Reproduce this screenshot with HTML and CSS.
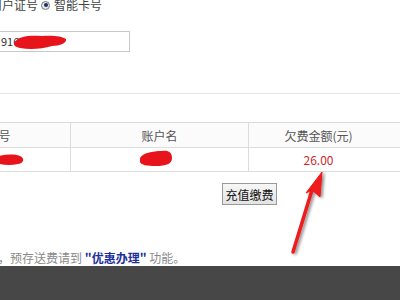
FILE: index.html
```html
<!DOCTYPE html>
<html lang="zh-CN">
<head>
<meta charset="utf-8">
<link rel="stylesheet" href="styles.css">
</head>
<body>
<div class="page">
  <div class="opts">
    <span class="radio"></span><span class="lbl">用户证号</span>
    <span class="radio on"></span><span class="lbl">智能卡号</span>
  </div>
  <div class="inputrow">
    <div class="field">916</div>
    <svg class="scrib s1" width="56" height="18" viewBox="0 0 56 18"><path d="M3 9 C6 3,18 2,30 3 C40 2,50 3,54 6 C55 10,48 13,40 13 C30 16,18 17,8 15 C3 14,1 12,3 9 Z" fill="#e8141b"/></svg>
  </div>
  <div class="sep"></div>
  <table class="grid">
    <thead>
      <tr><th class="c1">用户证号</th><th class="c2">账户名</th><th class="c3">欠费金额(元)</th></tr>
    </thead>
    <tbody>
      <tr><td class="c1"></td><td class="c2"></td><td class="c3 amt">26.00</td></tr>
    </tbody>
  </table>
  <div class="actions"><button class="btn">充值缴费</button></div>
  <p class="note">，预存送费请到 <b class="hl">"优惠办理"</b> 功能。</p>
</div>
<div class="bar"></div>
<svg class="scrib s2" width="30" height="14" viewBox="0 0 30 14"><path d="M0 4 C8 1,18 1,24 3 C29 5,28 10,22 11 C14 13,6 12,0 10 Z" fill="#e8141b"/></svg>
<svg class="scrib s3" width="36" height="18" viewBox="0 0 36 18"><path d="M2 8 C5 3,14 1,24 1 C30 0,34 2,34 8 C34 14,28 16,18 16 C9 16,3 15,2 12 Z" fill="#e8141b"/></svg>
<svg class="arrow" width="50" height="100" viewBox="0 0 50 100">
  <defs><filter id="sh" x="-50%" y="-50%" width="200%" height="200%"><feDropShadow dx="2" dy="1" stdDeviation="1.4" flood-color="#000" flood-opacity="0.45"/></filter></defs>
  <g filter="url(#sh)" fill="#ee1a1a" stroke="#ee1a1a">
    <line x1="13" y1="86" x2="32" y2="24" stroke-width="3.5" stroke-linecap="round"/>
    <polygon points="42,6 26,27 32,24 40,31" stroke-width="1" stroke-linejoin="round"/>
  </g>
</svg>
</body>
</html>
```
FILE: styles.css
```css
html, body {
  margin: 0;
  padding: 0;
  background: #fff;
  overflow: hidden;
  width: 400px;
  height: 300px;
  position: relative;
  font-family: "Noto Sans CJK SC", "Noto Sans", sans-serif;
  font-size: 12px;
}
.page {
  margin-left: -98px;
  width: 520px;
}
.opts {
  display: flex;
  align-items: center;
  height: 14px;
  margin-top: -2px;
  line-height: 14px;
  color: #444;
  padding-left: 72px;
}
.radio {
  width: 9px;
  height: 9px;
  border: 1px solid #7a7a7a;
  border-radius: 50%;
  background: radial-gradient(circle, #f4f4f4 0, #dcdcdc 100%);
  box-sizing: border-box;
  margin: 0 4px 0 3px;
  position: relative;
}
.radio.on::after {
  content: "";
  position: absolute;
  left: 1.5px;
  top: 1.5px;
  width: 4px;
  height: 4px;
  border-radius: 50%;
  background: #1b2f5e;
}
.inputrow {
  margin-top: 19px;
  position: relative;
  height: 21px;
}
.field {
  margin-left: 90px;
  width: 138px;
  height: 21px;
  box-sizing: border-box;
  border: 1px solid #c8c8c8;
  padding-left: 8px;
  line-height: 19px;
  color: #333;
  font-size: 11px;
}
.scrib { position: absolute; }
.s1 { left: 110px; top: 2px; }
.s2 { left: -4px; top: 153px; }
.s3 { left: 138px; top: 150px; }
.sep {
  margin-top: 41px;
  height: 1px;
  background: #e6e6e6;
}
.grid {
  margin-top: 28px;
  border-collapse: collapse;
  table-layout: fixed;
  width: 516px;
}
.grid th, .grid td {
  border: 1px solid #dcdcdc;
  text-align: center;
  font-weight: normal;
  color: #555;
  padding: 0;
}
.grid th { height: 24px; background: #fbfbfb; }
.grid td { height: 23px; }
.c1 { width: 167px; }
.c2 { width: 177px; }
.c3 { width: 170px; padding-right: 30px !important; box-sizing: border-box; }
.amt { color: #cc2a2e !important; }
.actions {
  margin-top: 11px;
  padding-left: 320px;
  height: 22px;
}
.btn {
  height: 22px;
  width: 55px;
  padding: 0;
  border: 1px solid #9a9a9a;
  background: linear-gradient(#f7f7f7, #e3e3e3);
  font-family: "Noto Sans CJK SC", sans-serif;
  font-size: 12px;
  color: #111;
}
.note {
  margin: 45px 0 0 96px;
  line-height: 16px;
  height: 16px;
  color: #8a8a8a;
}
.hl { color: #1e2f9a; }
.bar {
  position: absolute;
  left: 0;
  top: 266px;
  width: 400px;
  height: 34px;
  background: #474747;
}
.arrow { position: absolute; left: 280px; top: 166px; }
```
